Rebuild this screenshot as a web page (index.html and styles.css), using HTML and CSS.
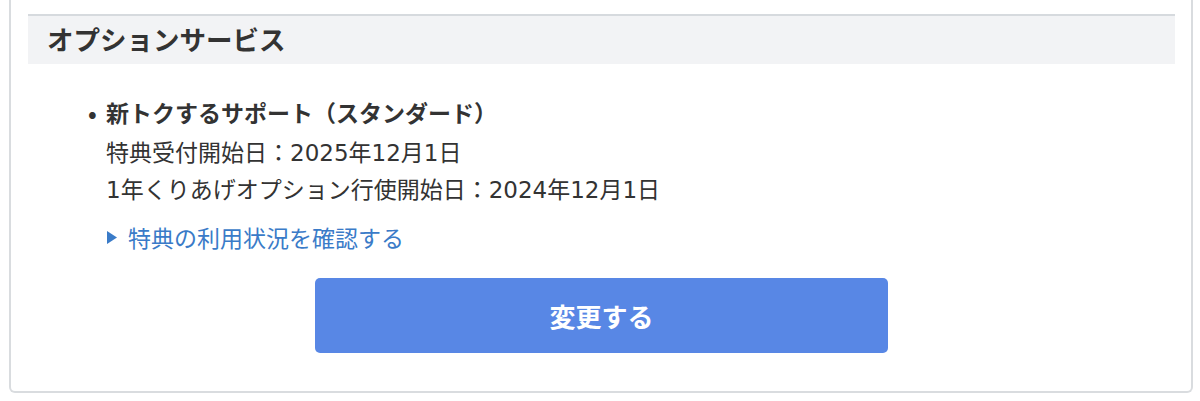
FILE: index.html
```html
<!DOCTYPE html>
<html lang="ja">
<head>
<meta charset="utf-8">
<title>オプションサービス</title>
<link rel="stylesheet" href="styles.css">
</head>
<body>
<div class="page">
  <section class="card">
    <h2 class="section-head">オプションサービス</h2>
    <div class="section-body">
      <ul class="service-list">
        <li class="service">
          <div class="service-title"><span class="bullet">•</span>新トクするサポート（スタンダード）</div>
          <p class="detail detail-first">特典受付開始日：2025年12月1日</p>
          <p class="detail">1年くりあげオプション行使開始日：2024年12月1日</p>
          <a class="link" href="#"><svg class="tri" width="10" height="13" viewBox="0 0 10 13"><path d="M0 0 L10 6.5 L0 13 Z" fill="#3a7bc8"/></svg>特典の利用状況を確認する</a>
        </li>
      </ul>
      <div class="actions">
        <button class="btn" type="button">変更する</button>
      </div>
    </div>
  </section>
</div>
</body>
</html>
```

FILE: styles.css
```css
html, body {
  margin: 0;
  padding: 0;
  background: #ffffff;
}
body {
  font-family: "Noto Sans CJK JP", "Noto Sans", sans-serif;
  color: #333333;
}
.page {
  padding: 0 7px 8px 9px;
}
.card {
  border: 2px solid #d9dcdf;
  border-top: none;
  border-radius: 0 0 6px 6px;
  padding: 14px 16px 0 17px;
}
.section-head {
  margin: 0;
  border-top: 2px solid #d6dade;
  background: #f2f3f5;
  height: 48px;
  line-height: 46px;
  padding-left: 19px;
  font-size: 26.5px;
  font-weight: 700;
  color: #333333;
}
.section-body {
  padding: 28px 0 38px 0;
}
.service-list {
  list-style: none;
  margin: 0 0 0 60px;
  padding: 0;
}
.service-title {
  display: flex;
  font-size: 23px;
  font-weight: 700;
  line-height: 40px;
}
.bullet {
  width: 18px;
  flex: none;
}
.detail {
  margin: 0 0 0 18px;
  font-family: "DejaVu Sans", "Noto Sans CJK JP", sans-serif;
  font-size: 23px;
  line-height: 37px;
}
.detail-first {
  margin-top: 3px;
}
.link {
  display: flex;
  align-items: center;
  margin: 10px 0 0 19px;
  font-size: 23px;
  line-height: 37px;
  color: #3a7bc8;
  text-decoration: none;
}
.tri {
  margin-right: 11px;
  flex: none;
}
.actions {
  display: flex;
  justify-content: center;
  margin-top: 22px;
}
.btn {
  width: 573px;
  height: 75px;
  border: none;
  border-radius: 5px;
  background: #5887e5;
  color: #ffffff;
  font-family: "Noto Sans CJK JP", "Noto Sans", sans-serif;
  font-size: 26px;
  font-weight: 700;
  padding: 0;
}
```
